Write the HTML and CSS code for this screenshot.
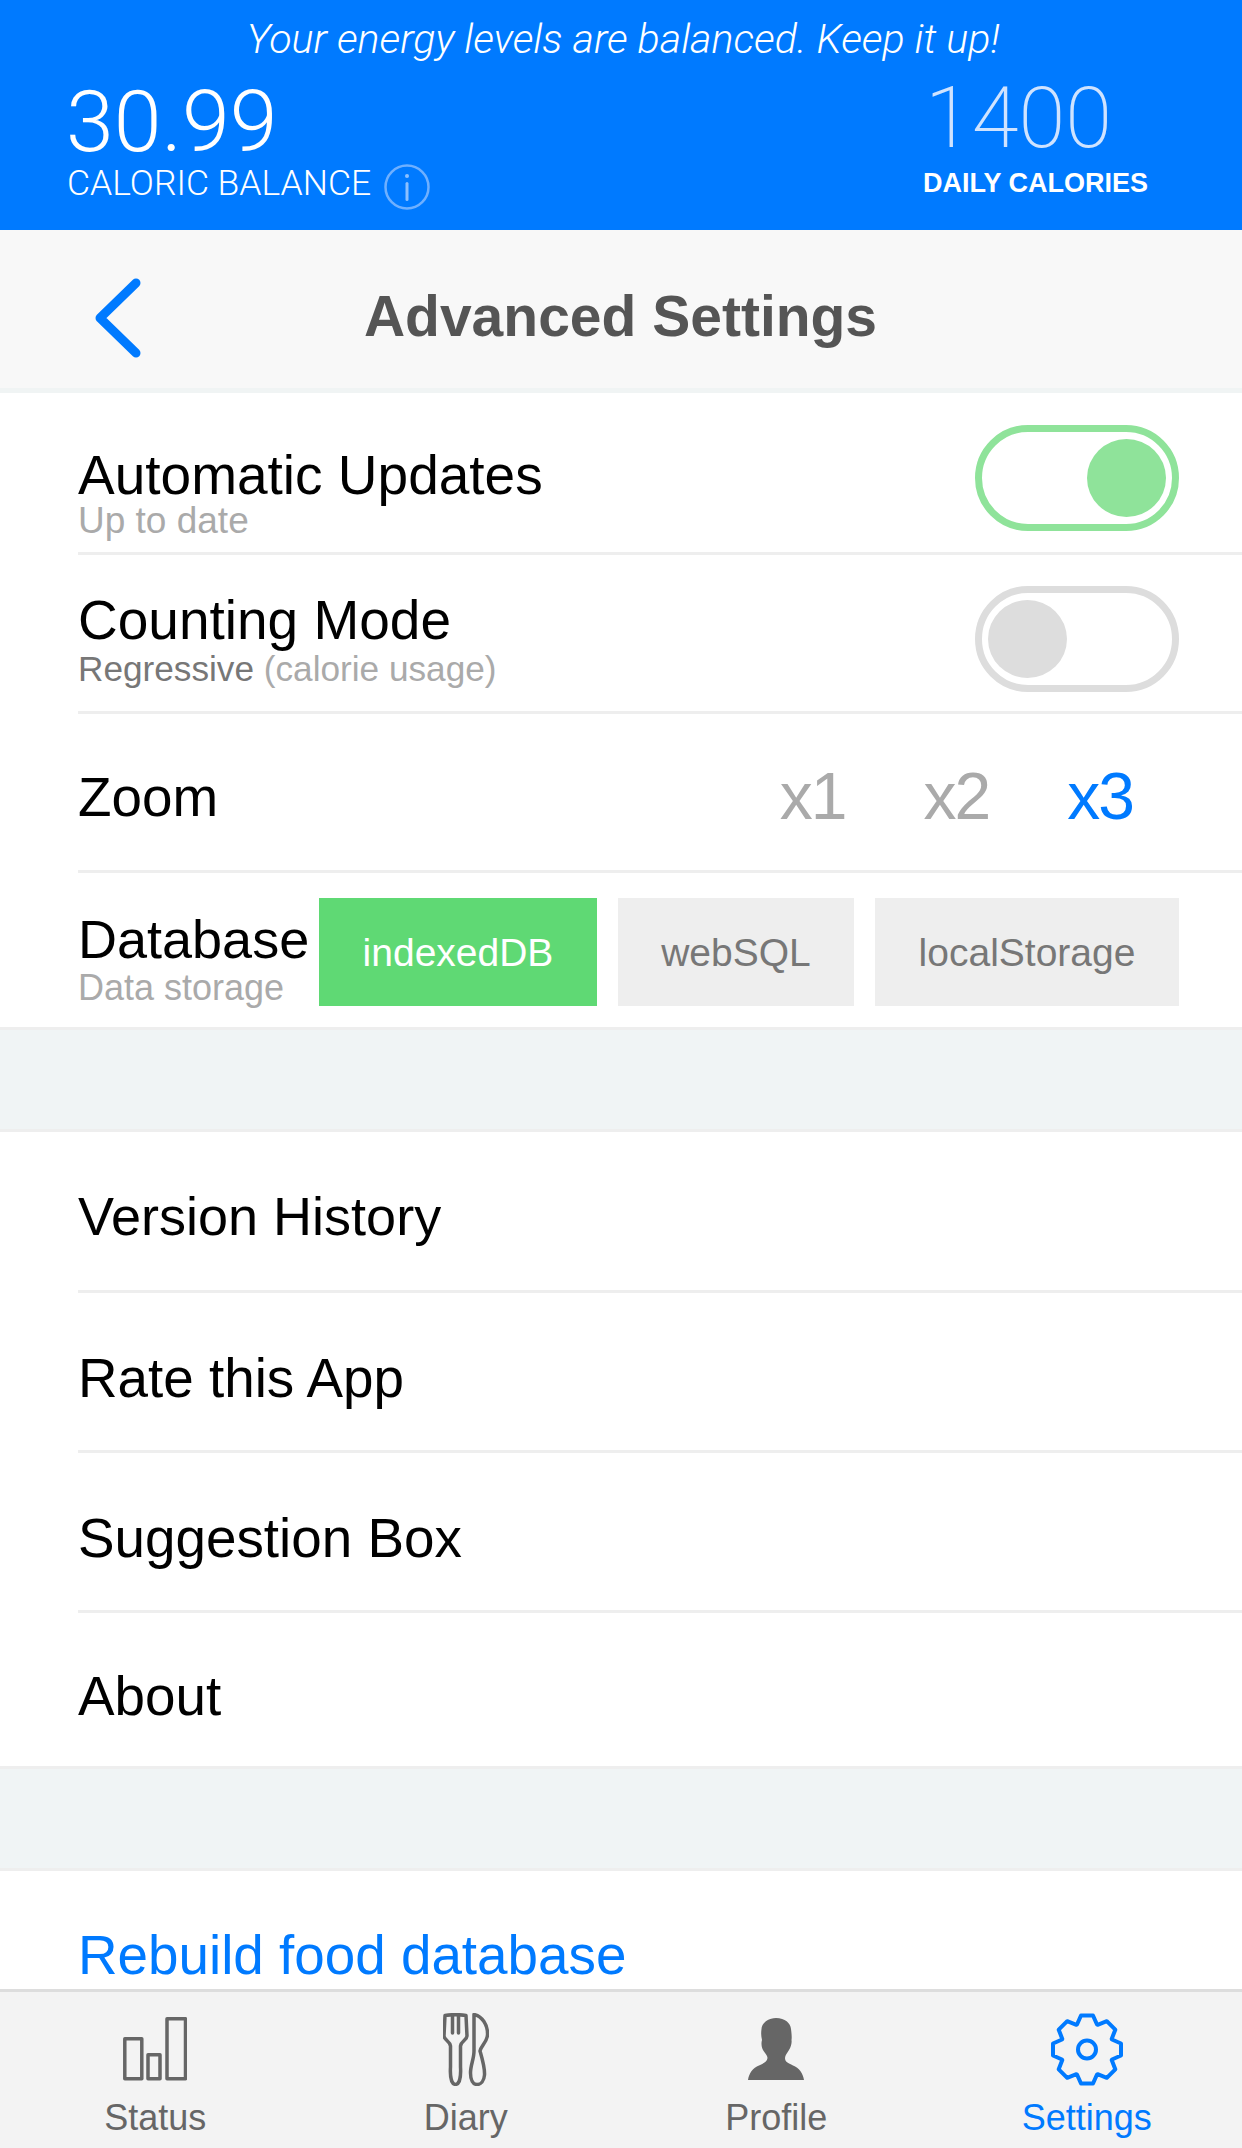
FILE: index.html
```html
<!DOCTYPE html>
<html lang="en">
<head>
  <meta charset="UTF-8" />
  <meta name="viewport" content="width=device-width, initial-scale=1.0"/>
  <title>Advanced Settings</title>
  <link rel="stylesheet" href="styles.css">
</head>
<body>
<div class="app">
  <header class="summary">
    <p class="summary-msg">Your energy levels are balanced. Keep it up!</p>
    <div class="summary-stats">
      <div class="stat">
        <div class="stat-value stat-main">30.99</div>
        <div class="stat-label">
          <span>CALORIC BALANCE</span>
          <svg class="info-icon" viewBox="0 0 46 46" width="46" height="46">
            <circle cx="23" cy="23" r="21.5" fill="none" stroke="#6fb0ff" stroke-width="2.5"/>
            <circle cx="23" cy="12" r="2" fill="#8cc0ff"/>
            <rect x="21.5" y="18" width="3" height="19" rx="1.5" fill="#8cc0ff"/>
          </svg>
        </div>
      </div>
      <div class="stat stat-right">
        <div class="stat-value stat-thin">1400</div>
        <div class="stat-label stat-bold">DAILY CALORIES</div>
      </div>
    </div>
  </header>

  <nav class="navbar">
    <svg class="back-icon" viewBox="0 0 48 80" width="48" height="80">
      <polyline points="42,5 6,40 42,75" fill="none" stroke="#007aff" stroke-width="9" stroke-linecap="round" stroke-linejoin="round"/>
    </svg>
    <h1 class="navbar-title">Advanced Settings</h1>
  </nav>

  <main class="content">
    <section class="group group-first">
      <div class="row row-update">
        <div class="row-text">
          <div class="row-title">Automatic Updates</div>
          <div class="row-sub">Up to date</div>
        </div>
        <div class="toggle toggle-on"><span class="knob"></span></div>
      </div>
      <div class="row row-count">
        <div class="row-text">
          <div class="row-title">Counting Mode</div>
          <div class="row-sub"><span class="sub-dark">Regressive</span> (calorie usage)</div>
        </div>
        <div class="toggle"><span class="knob"></span></div>
      </div>
      <div class="row row-zoom">
        <div class="row-title">Zoom</div>
        <div class="zoom-opts">
          <span>x1</span>
          <span>x2</span>
          <span class="active">x3</span>
        </div>
      </div>
      <div class="row row-db row-last">
        <div class="row-text">
          <div class="row-title">Database</div>
          <div class="row-sub">Data storage</div>
        </div>
        <div class="db-opts">
          <span class="db-btn db-indexed active">indexedDB</span>
          <span class="db-btn db-web">webSQL</span>
          <span class="db-btn db-local">localStorage</span>
        </div>
      </div>
    </section>

    <section class="group">
      <div class="row row-link row-version"><div class="row-title">Version History</div></div>
      <div class="row row-link"><div class="row-title">Rate this App</div></div>
      <div class="row row-link"><div class="row-title">Suggestion Box</div></div>
      <div class="row row-link row-about row-last"><div class="row-title">About</div></div>
    </section>

    <section class="group">
      <div class="row row-link row-last"><div class="row-title row-action">Rebuild food database</div></div>
    </section>
  </main>

  <footer class="tabbar">
    <div class="tab">
      <svg class="tab-icon" viewBox="0 0 64 73" width="64" height="73">
        <g fill="none" stroke="#666" stroke-width="3.5" stroke-linejoin="round">
          <rect x="1.8" y="25.8" width="17" height="40"/>
          <rect x="25" y="41.8" width="12" height="24"/>
          <rect x="44" y="5.8" width="18.5" height="60"/>
        </g>
      </svg>
      <span>Status</span>
    </div>
    <div class="tab">
      <svg class="tab-icon" viewBox="0 0 46 73" width="46" height="73">
        <g fill="none" stroke="#666" stroke-width="3.5" stroke-linejoin="round" stroke-linecap="round">
          <path d="M2 2.5C8 1.5 17 1.5 23 2.5L24 23C24 27 18 28 17.5 33L17.5 54C18 62 17 71 12.5 71.5C8 71 7 62 7.5 54L7.5 33C7 28 1 27 1 23Z"/>
          <path d="M9.5 3V20M15.5 3V20"/>
          <path d="M31 1.5C39 3 45 12 44.5 22C44 29 38 33 37 38C39 45 42 55 41.5 62C41 68 38 71.5 34 71.5C30 71.5 27.5 67 27.5 60C27.5 52 31 46 31 38Z"/>
        </g>
      </svg>
      <span>Diary</span>
    </div>
    <div class="tab">
      <svg class="tab-icon" viewBox="0 0 58 73" width="58" height="73">
        <path fill="#666" d="M29 5C38 5 43.5 10 44 16C44.5 20 45 24 44.5 27C45 30 44 34 42 37C40.5 40 38 42 38 45C38 49 41 50 46 52.5C52 55 56 60 57 67H1C2 60 6 55 12 52.5C17 50 20 49 20.5 45C20.5 42 17.5 40 16 37C14.5 34 14 30 15 27C14 23 14 20 14.5 16C15 10 21 5 29 5Z"/>
      </svg>
      <span>Profile</span>
    </div>
    <div class="tab tab-active">
      <svg class="tab-icon" viewBox="0 0 72 73" width="72" height="73">
        <polygon fill="none" stroke="#007aff" stroke-width="4" stroke-linejoin="round" points="26,11.5 30,2.5 42,2.5 46,11.5 46.6,11.8 55.8,8.2 64.3,16.7 60.7,25.9 61,26.5 70,30.5 70,42.5 61,46.5 60.7,47.1 64.3,56.3 55.8,64.8 46.6,61.2 46,61.5 42,70.5 30,70.5 26,61.5 25.4,61.2 16.2,64.8 7.7,56.3 11.3,47.1 11,46.5 2,42.5 2,30.5 11,26.5 11.3,25.9 7.7,16.7 16.2,8.2 25.4,11.8"/>
        <circle cx="36" cy="36.5" r="9" fill="none" stroke="#007aff" stroke-width="4"/>
      </svg>
      <span>Settings</span>
    </div>
  </footer>
</div>
</body>
</html>
```

FILE: styles.css
```css
html, body {
  margin: 0;
  padding: 0;
}
body {
  font-family: "Liberation Sans", Arial, sans-serif;
  background-color: #fff;
}
.app {
  width: 1242px;
  height: 2148px;
  display: flex;
  flex-direction: column;
  overflow: hidden;
}

/* blue summary header */
.summary {
  height: 230px;
  flex: none;
  background-color: #007aff;
  color: #fff;
  box-sizing: border-box;
  padding-top: 16px;
  font-family: Roboto, sans-serif;
  font-weight: 300;
}
.summary-msg {
  margin: 0;
  padding-left: 4px;
  text-align: center;
  font-size: 41.2px;
  line-height: 46px;
  font-style: italic;
}
.summary-stats {
  display: flex;
  justify-content: space-between;
  padding: 0 94px 0 67px;
}
.stat-value {
  font-size: 85px;
  line-height: 84px;
  margin-top: 18px;
}
.stat-main {
  font-size: 86px;
  margin-left: -1px;
}
.stat-thin {
  color: #cfe3ff;
  font-weight: 200;
  margin-top: 14px;
  padding-left: 2px;
}
.stat-label {
  display: flex;
  align-items: flex-start;
  gap: 13px;
  font-size: 35.5px;
  line-height: 38px;
}
.info-icon {
  flex: none;
}
.stat-bold {
  font-family: "Liberation Sans", Arial, sans-serif;
  font-weight: 700;
  font-size: 27px;
  line-height: 40px;
  margin-top: 3px;
}

/* nav bar */
.navbar {
  height: 163px;
  flex: none;
  box-sizing: border-box;
  background-color: #f8f8f8;
  border-bottom: 5px solid #f0f4f4;
  padding-top: 13px;
  display: flex;
  align-items: center;
  justify-content: center;
  position: relative;
}
.back-icon {
  position: absolute;
  left: 94px;
  top: 48px;
}
.navbar-title {
  margin: 0;
  color: #555;
  font-size: 57px;
  font-weight: 700;
  padding-right: 1px;
}

/* settings list */
.content {
  flex: 1;
  min-height: 0;
  overflow: hidden;
  background-color: #f0f4f5;
}
.group {
  background-color: #fff;
  padding-left: 78px;
  margin-top: 99px;
  border-top: 3px solid #eee;
  border-bottom: 3px solid #eee;
}
.group-first {
  margin-top: 0;
  border-top: none;
}
.row {
  display: flex;
  align-items: center;
  justify-content: space-between;
  box-sizing: border-box;
  padding-right: 63px;
  border-bottom: 3px solid #eee;
}
.row-last {
  border-bottom: none;
}
.row-update {
  height: 162px;
}
.row-count {
  height: 159px;
}
.row-zoom {
  height: 159px;
}
.row-db {
  height: 154px;
}
.row-link {
  height: 160px;
}
.row-version {
  height: 161px;
}
.row-about {
  height: 153px;
}
.row-title {
  font-size: 54.8px;
  line-height: 62px;
  padding-top: 10px;
  color: #000;
}
.row-link .row-title {
  padding-top: 12px;
}
.row-update .row-title,
.row-count .row-title {
  font-size: 55px;
}
.row-db .row-title,
.row-version .row-title {
  font-size: 54px;
}
.row-version .row-title {
  padding-top: 10px;
}
.row-link .row-action {
  color: #007aff;
  padding-top: 8px;
}
.row-sub {
  font-size: 36px;
  line-height: 36px;
  color: #aaa;
}
.sub-dark {
  color: #777;
}
.row-update .row-text {
  margin-top: 24px;
}
.row-update .row-sub {
  font-size: 37px;
  line-height: 30px;
}
.row-count .row-sub {
  font-size: 35.2px;
}
.row-db .row-text {
  margin-top: 4px;
}
.row-db .db-opts {
  margin-top: 3px;
}

.toggle {
  width: 204px;
  height: 106px;
  box-sizing: border-box;
  border: 7px solid #ddd;
  border-radius: 53px;
  padding: 7px 6px;
  display: flex;
  margin-top: 12px;
}
.knob {
  width: 79px;
  height: 78px;
  border-radius: 50%;
  background-color: #ddd;
}
.toggle-on {
  border-color: #8fe39a;
  justify-content: flex-end;
  margin-top: 10px;
}
.toggle-on .knob {
  background-color: #8fe39a;
}

.zoom-opts {
  display: flex;
  gap: 78px;
  padding-right: 46px;
  margin-top: 8px;
  font-size: 66px;
  letter-spacing: -2px;
  color: #aaa;
}
.zoom-opts .active {
  color: #007aff;
}

.db-opts {
  display: flex;
  gap: 21px;
}
.db-btn {
  height: 108px;
  box-sizing: border-box;
  padding-top: 2px;
  display: flex;
  align-items: center;
  justify-content: center;
  background-color: #eee;
  color: #777;
  font-size: 39px;
}
.db-btn.active {
  background-color: #5fd974;
  color: #fff;
}
.db-indexed {
  width: 278px;
}
.db-web {
  width: 236px;
}
.db-local {
  width: 304px;
}

/* tab bar */
.tabbar {
  height: 159px;
  flex: none;
  box-sizing: border-box;
  background-color: #f3f3f3;
  border-top: 3px solid #ddd;
  display: grid;
  grid-template-columns: repeat(4, 310.5px);
}
.tab {
  display: flex;
  flex-direction: column;
  align-items: center;
  padding-top: 21px;
  color: #666;
  font-size: 36px;
  line-height: 44px;
}
.tab-icon {
  flex: none;
  margin-bottom: 10px;
}
.tab-active {
  color: #007aff;
}
```
